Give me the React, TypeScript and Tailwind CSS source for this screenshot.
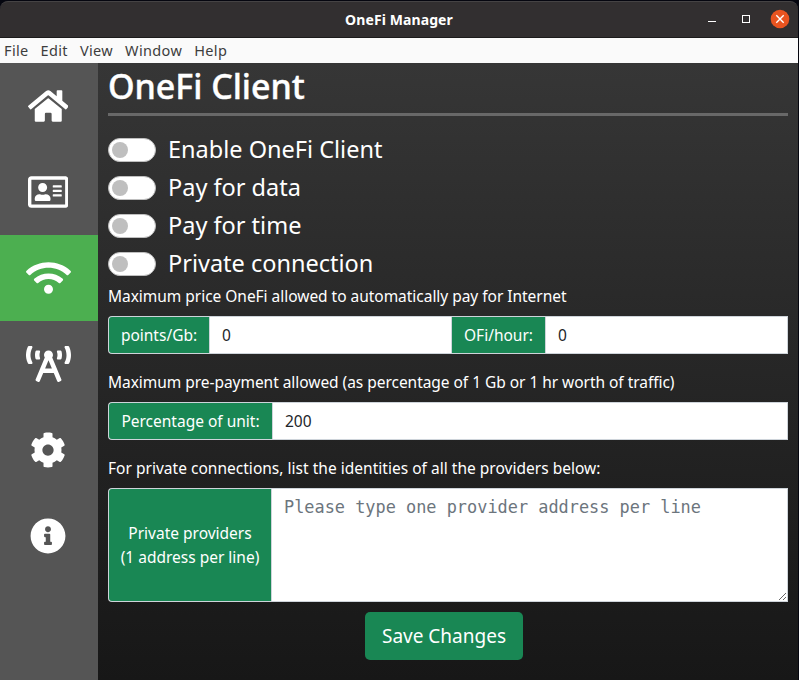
import type { ReactNode } from "react";
import { FaHome, FaRegAddressCard, FaWifi, FaBroadcastTower, FaCog, FaInfoCircle } from "react-icons/fa";

const navItems = [
  { key: "home", icon: <FaHome className="h-9 w-[40.5px]" /> },
  { key: "identity", icon: <FaRegAddressCard className="h-9 w-[40.5px]" /> },
  { key: "client", icon: <FaWifi className="h-9 w-[45px]" />, active: true },
  { key: "provider", icon: <FaBroadcastTower className="h-9 w-[45px]" /> },
  { key: "settings", icon: <FaCog className="h-9 w-9" /> },
  { key: "about", icon: <FaInfoCircle className="h-9 w-9" /> },
];

function TitleBar() {
  return (
    <header className="bg-[#05060f]">
      <div className="relative mt-px mr-px flex h-[37px] items-center justify-center rounded-t-lg border-t border-b border-t-[#454344] border-b-[#1c1b1b] bg-[#322f30]">
        <span className="text-[14px] leading-5 font-bold tracking-[0.1px] text-white">OneFi Manager</span>
        <div className="absolute top-[7px] right-[8px] flex items-center">
          <svg width="82" height="20" viewBox="0 0 82 20" fill="none">
            <path d="M0 12.5h8" stroke="#fff" />
            <rect x="34.5" y="6.5" width="7" height="7" stroke="#fff" />
            <circle cx="72" cy="10" r="9.3" fill="#e95420" />
            <path d="M68.3 6.3l7.4 7.4M75.7 6.3l-7.4 7.4" stroke="#fff" strokeWidth="1.4" />
          </svg>
        </div>
      </div>
    </header>
  );
}

function MenuBar() {
  return (
    <nav className="flex h-[25px] items-center gap-[12px] bg-[#fafafa] pl-[4px] text-[14.5px] tracking-[0.35px] text-[#3d3d3d]">
      {["File", "Edit", "View", "Window", "Help"].map((item) => (
        <span key={item}>{item}</span>
      ))}
    </nav>
  );
}

function SwitchRow({ label }: { label: string }) {
  return (
    <label className="flex h-[38px] items-center">
      <span className="flex h-6 w-12 items-center rounded-full border border-[#bfbfbf] bg-white pl-[3px]">
        <span className="h-4 w-4 rounded-full bg-[#bfbfbf]" />
      </span>
      <span className="ml-3 pb-0.5 text-[23.5px] leading-8">{label}</span>
    </label>
  );
}

function Addon({ children, className }: { children: ReactNode; className: string }) {
  return (
    <span className={`flex shrink-0 items-center justify-center border-y border-l border-[#ced4da] bg-[#198754] text-center leading-6 whitespace-nowrap ${className}`}>
      {children}
    </span>
  );
}

const fieldClass = "min-w-0 flex-1 border border-[#ced4da] bg-white px-3 text-[#212529] outline-none";

export default function App() {
  return (
    <div className="flex h-[680px] w-[799px] flex-col overflow-hidden bg-[#05060f] font-['Noto_Sans',sans-serif]">
      <TitleBar />
      <div className="mr-px flex flex-1 flex-col">
        <MenuBar />
        <div className="flex flex-1">
          <aside className="w-[98px] shrink-0 bg-[#555]">
            {navItems.map((item) => (
              <div
                key={item.key}
                className={`flex h-[86px] items-center justify-center pr-[2px] text-white ${item.active ? "bg-[#4caf50]" : ""}`}
              >
                {item.icon}
              </div>
            ))}
          </aside>
          <main className="flex min-w-0 flex-1 flex-col bg-linear-to-b from-[#363636] to-[#171717] px-2.5 text-[15.5px] text-white">
            <h1 className="h-[50px] text-[34px] leading-[46px] font-medium tracking-[-0.05px] [-webkit-text-stroke:0.4px_white]">OneFi Client</h1>
            <hr className="mb-[15px] border-t-3 border-[#686868]" />
            <SwitchRow label="Enable OneFi Client" />
            <SwitchRow label="Pay for data" />
            <SwitchRow label="Pay for time" />
            <SwitchRow label="Private connection" />

            <p className="mt-px mb-2 leading-6 tracking-[-0.03px]">Maximum price OneFi allowed to automatically pay for Internet</p>
            <div className="mb-4 flex h-[38px]">
              <Addon className="w-[101px] rounded-l">points/Gb:</Addon>
              <input className={`${fieldClass} border-r-0 pt-0.5`} defaultValue="0" />
              <Addon className="w-[94px]">OFi/hour:</Addon>
              <input className={`${fieldClass} pt-0.5`} defaultValue="0" />
            </div>

            <p className="mb-2 leading-6 tracking-[-0.04px]">
              Maximum pre-payment allowed (as percentage of 1 Gb or 1 hr worth of traffic)
            </p>
            <div className="mb-4 flex h-[38px]">
              <Addon className="w-[164px] rounded-l">Percentage of unit:</Addon>
              <input className={`${fieldClass} pt-0.5`} defaultValue="200" />
            </div>

            <p className="mb-2 leading-6 tracking-[0.02px]">
              For private connections, list the identities of all the providers below:
            </p>
            <div className="flex h-[114px]">
              <Addon className="w-[163px] rounded-l">
                Private providers
                <br />
                (1 address per line)
              </Addon>
              <textarea
                className={`${fieldClass} py-1.5 font-['DejaVu_Sans_Mono',monospace] text-[16.9px] leading-6 placeholder:text-[#6c757d]`}
                placeholder="Please type one provider address per line"
              />
            </div>
            <button className="mt-2.5 mr-[8px] h-12 w-[158px] self-center rounded-[5px] bg-[#198754] text-[19px]">Save Changes</button>
          </main>
        </div>
      </div>
    </div>
  );
}
